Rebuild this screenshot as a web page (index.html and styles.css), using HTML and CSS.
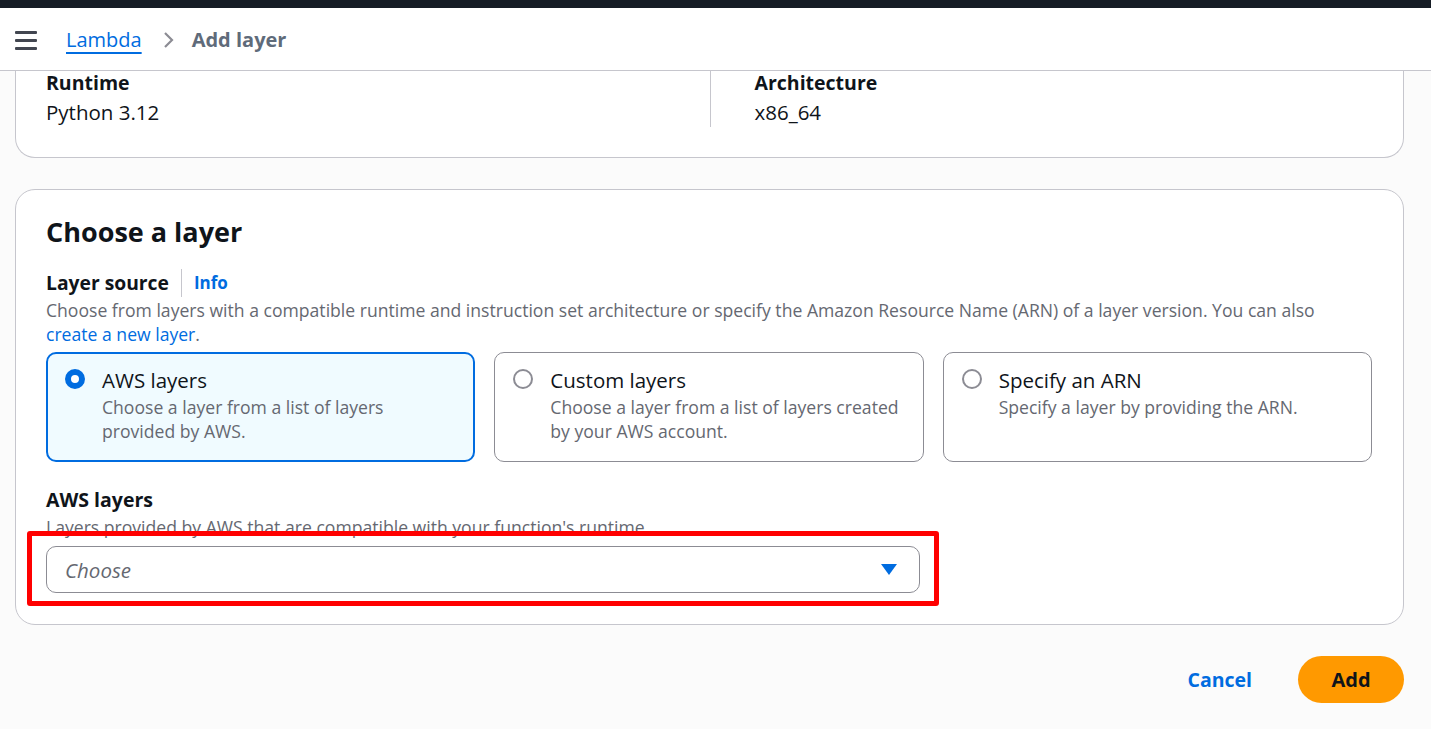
FILE: index.html
```html
<!DOCTYPE html>
<html lang="en">
<head>
<meta charset="utf-8">
<title>Add layer</title>
<link rel="stylesheet" href="styles.css">
</head>
<body>
<div class="topbar"></div>
<header class="header">
  <button class="menu" aria-label="Menu">
    <span></span><span></span><span></span>
  </button>
  <nav class="crumbs">
    <a class="crumb-link" href="#">Lambda</a>
    <svg class="chev" width="12" height="18" viewBox="0 0 12 18"><path d="M3 2 L10 9 L3 16" fill="none" stroke="#8c8c94" stroke-width="2.2"/></svg>
    <span class="crumb-current">Add layer</span>
  </nav>
</header>
<main class="main">
  <section class="card card-top">
    <div class="cols">
      <div class="col">
        <div class="label">Runtime</div>
        <div class="value">Python 3.12</div>
      </div>
      <div class="col col-right">
        <div class="label">Architecture</div>
        <div class="value">x86_64</div>
      </div>
    </div>
  </section>

  <section class="card card-main">
    <h2 class="title">Choose a layer</h2>
    <div class="field-head">
      <span class="label">Layer source</span>
      <span class="sep"></span>
      <a class="info" href="#">Info</a>
    </div>
    <p class="desc">Choose from layers with a compatible runtime and instruction set architecture or specify the Amazon Resource Name (ARN) of a layer version. You can also <a class="link" href="#">create a new layer</a>.</p>
    <div class="tiles">
      <div class="tile tile-selected">
        <span class="radio radio-on"></span>
        <div class="tile-text">
          <div class="tile-label">AWS layers</div>
          <div class="tile-desc">Choose a layer from a list of layers provided by AWS.</div>
        </div>
      </div>
      <div class="tile">
        <span class="radio"></span>
        <div class="tile-text">
          <div class="tile-label">Custom layers</div>
          <div class="tile-desc">Choose a layer from a list of layers created by your AWS account.</div>
        </div>
      </div>
      <div class="tile">
        <span class="radio"></span>
        <div class="tile-text">
          <div class="tile-label">Specify an ARN</div>
          <div class="tile-desc">Specify a layer by providing the ARN.</div>
        </div>
      </div>
    </div>
    <div class="label aws-label">AWS layers</div>
    <p class="desc desc-small">Layers provided by AWS that are compatible with your function's runtime.</p>
    <div class="select-wrap">
      <div class="select">
        <span class="placeholder">Choose</span>
        <svg class="caret" width="16" height="11" viewBox="0 0 16 11"><path d="M0 0 L16 0 L8 11 Z" fill="#006ce0"/></svg>
      </div>
      <div class="highlight"></div>
    </div>
  </section>

  <div class="actions">
    <a class="cancel" href="#">Cancel</a>
    <button class="add">Add</button>
  </div>
</main>
</body>
</html>
```
FILE: styles.css
```css
* { box-sizing: border-box; }
html, body {
  margin: 0;
  padding: 0;
}
body {
  background: #fbfbfb;
  font-family: "Open Sans", "Noto Sans", sans-serif;
  color: #0f141a;
  font-size: 17.6px;
  line-height: 24px;
  height: 729px;
  overflow: hidden;
}
.topbar {
  height: 8px;
  background: #161d26;
}
.header {
  height: 63px;
  background: #ffffff;
  border-bottom: 1px solid #c6c6cd;
  display: flex;
  align-items: center;
  padding-left: 15px;
  position: relative;
  z-index: 2;
}
.menu {
  width: 22px;
  height: 19px;
  padding: 0;
  border: 0;
  background: transparent;
  display: flex;
  flex-direction: column;
  justify-content: space-between;
  margin-top: 2px;
}
.menu span {
  display: block;
  height: 3px;
  background: #424650;
  border-radius: 1px;
}
.crumbs {
  display: flex;
  align-items: center;
  margin-left: 29px;
  font-size: 20px;
  padding-top: 1px;
}
.crumb-link {
  color: #006ce0;
  text-decoration: underline;
  text-decoration-thickness: 2px;
  text-underline-offset: 5px;
}
.chev {
  margin: 0 18px 0 20px;
}
.crumb-current {
  color: #5f6b7a;
  font-weight: 700;
}
.main {
  padding: 0 27px 0 15px;
}
.card {
  background: #ffffff;
  border: 1px solid #c6c6cd;
  border-radius: 20px;
}
.card-top {
  border-top: 0;
  border-radius: 0 0 20px 20px;
  padding: 0 30px 30px 30px;
}
.cols {
  display: grid;
  grid-template-columns: 1fr 1fr;
}
.col-right {
  border-left: 1px solid #c6c6cd;
  padding-left: 44px;
  padding-bottom: 3px;
}
.label {
  font-weight: 700;
  font-size: 19.5px;
}
.value {
  margin-top: 5px;
  font-size: 20.5px;
}
.card-main {
  margin-top: 31px;
  padding: 24px 31px 31px 30px;
}
.title {
  margin: 0;
  font-size: 27px;
  line-height: 36px;
  font-weight: 700;
}
.field-head {
  display: flex;
  align-items: center;
  margin-top: 19px;
}
.field-head .label {
  font-size: 19.3px;
}
.sep {
  width: 1px;
  height: 28px;
  background: #c6c6cd;
  margin: 0 12px 0 12px;
}
.info {
  color: #006ce0;
  font-weight: 700;
  text-decoration: none;
  font-size: 17px;
}
.desc {
  margin: 1px 0 0 0;
  color: #656871;
}
.link {
  color: #006ce0;
  text-decoration: none;
  white-space: nowrap;
}
.tiles {
  display: grid;
  grid-template-columns: repeat(3, 1fr);
  gap: 19px;
  margin-top: 6px;
}
.tile {
  display: flex;
  align-items: flex-start;
  gap: 17px;
  border: 1px solid #8c8c94;
  border-radius: 10px;
  padding: 15px 19px 18px 18px;
  min-height: 109px;
}
.tile-selected {
  border: 2px solid #006ce0;
  background: #f0fbff;
  padding: 14px 18px 17px 17px;
}
.radio {
  flex: 0 0 auto;
  width: 20px;
  height: 20px;
  border-radius: 50%;
  border: 2px solid #8c8c94;
  background: #ffffff;
  margin-top: 1px;
}
.radio-on {
  border: 6.5px solid #006ce0;
}
.tile-label {
  font-size: 20.5px;
  line-height: 24px;
}
.tile-desc {
  color: #656871;
  margin-top: 3px;
}
.aws-label {
  margin-top: 26px;
}
.desc-small {
  margin-top: 3px;
}
.select-wrap {
  position: relative;
  width: 874px;
  margin-top: 7px;
}
.select {
  height: 47px;
  border: 1px solid #8c8c94;
  border-radius: 10px;
  background: #ffffff;
  display: flex;
  align-items: center;
  justify-content: space-between;
  padding: 0 22px 0 18px;
}
.placeholder {
  font-style: italic;
  color: #656871;
  font-size: 20.5px;
}
.highlight {
  position: absolute;
  left: -19px;
  right: -19px;
  top: -15px;
  bottom: -13px;
  border: 5px solid #ff0000;
  border-radius: 3px;
  pointer-events: none;
}
.actions {
  display: flex;
  justify-content: flex-end;
  align-items: center;
  margin-top: 31px;
}
.cancel {
  color: #006ce0;
  font-weight: 700;
  font-size: 19.5px;
  text-decoration: none;
  margin-right: 46px;
}
.add {
  width: 106px;
  height: 47px;
  border: 0;
  border-radius: 24px;
  background: #ff9900;
  color: #0f141a;
  font-family: inherit;
  font-weight: 700;
  font-size: 20px;
}
```
